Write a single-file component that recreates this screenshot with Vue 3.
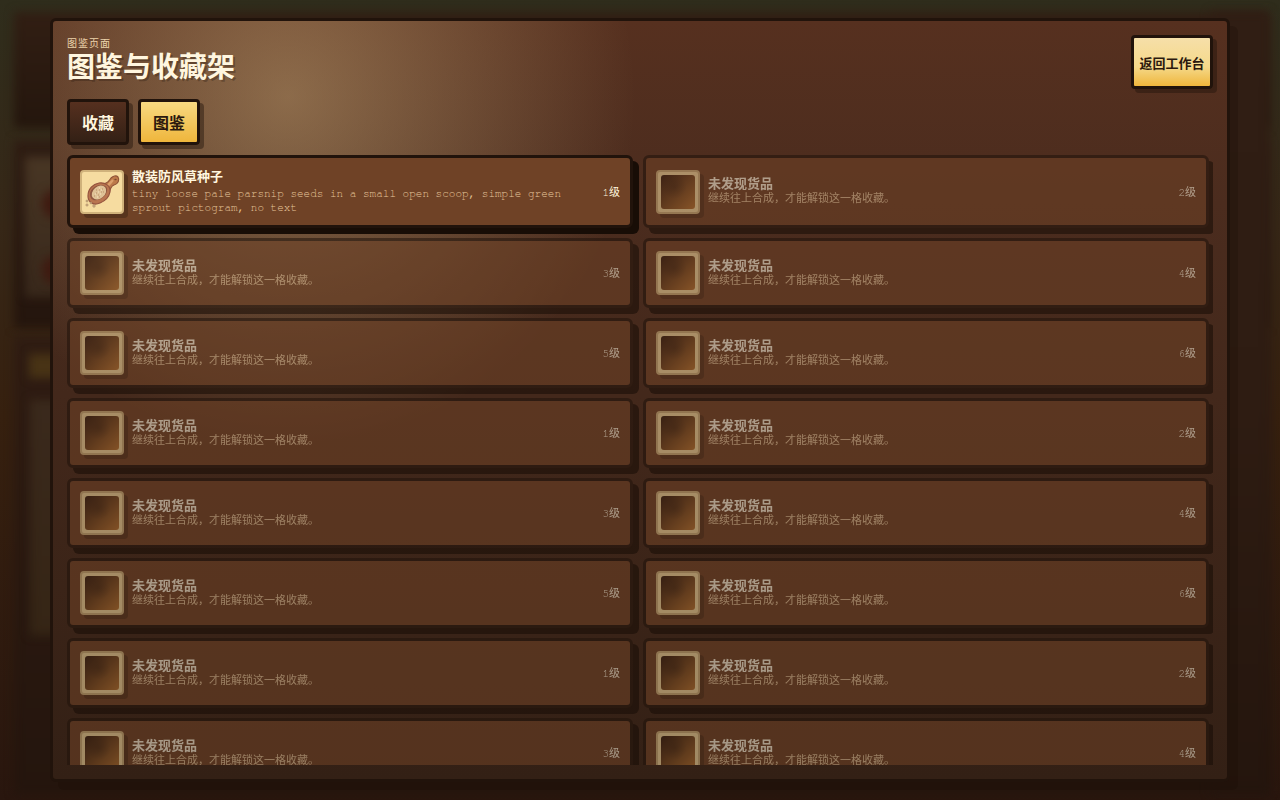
<script setup>
import { ref } from 'vue'

const tab = ref('codex')
const tabs = [
  { id: 'favorites', label: '收藏' },
  { id: 'codex', label: '图鉴' }
]

const found = {
  name: '散装防风草种子',
  note: 'tiny loose pale parsnip seeds in a small open scoop, simple green sprout pictogram, no text'
}

// levels run 1 to 6 per chain, only the very first item is unlocked
const entries = Array.from({ length: 16 }, (_, i) => ({
  id: i,
  level: (i % 6) + 1,
  locked: i > 0,
  name: i > 0 ? '未发现货品' : found.name,
  note: i > 0 ? '继续往上合成，才能解锁这一格收藏。' : found.note
}))
</script>

<template>
  <div class="screen">
    <div class="backdrop" aria-hidden="true">
      <div class="blur-box top-bar"></div>
      <div class="blur-box order"></div>
      <div class="blur-box side"></div>
      <div class="blur-box right"></div>
      <div class="blur-box poster"></div>
      <div class="blur-box badge"></div>
      <div class="blur-box note"></div>
      <div class="blur-box spot spot-a"></div>
      <div class="blur-box spot spot-b"></div>
    </div>

    <main class="panel">
      <header class="head">
        <div class="titles">
          <p class="eyebrow">图鉴页面</p>
          <h1>图鉴与收藏架</h1>
        </div>
        <button type="button" class="back">返回工作台</button>
      </header>

      <nav class="tabs">
        <button
          v-for="t in tabs"
          :key="t.id"
          type="button"
          class="tab"
          :class="{ active: tab === t.id }"
          @click="tab = t.id"
        >{{ t.label }}</button>
      </nav>

      <section class="grid">
        <article v-for="e in entries" :key="e.id" class="card" :class="{ locked: e.locked }">
          <div class="icon">
            <i v-if="e.locked" class="unknown"></i>
            <svg v-else viewBox="0 0 40 40" class="scoop">
              <path d="M20 12 C25 12 27 9 29 6 C31 4 34 3 36 5 C38 8 36 12 32 13 C29 14 28 17 27 21 Z" fill="#bd7a49" stroke="#8f5236" stroke-width="1.1" />
              <path d="M24 15 C27 13 29 10 31 8" fill="none" stroke="#dca06c" stroke-width="2.4" />
              <ellipse cx="33.5" cy="7.5" rx="1.2" ry="0.8" fill="#7d4832" />
              <path d="M6 24 C6 17 11 12 17 11 C23 10 29 14 28 20 C27 25 23 29 18 31 C11 34 6 30 6 24 Z" fill="#b9754f" stroke="#95543f" stroke-width="1.2" />
              <path d="M8 22 C8 17 14 13 18 13 C23 13 26 15 25 19 C24 24 20 27 15 28 C11 29 8 27 8 22 Z" fill="#8f5740" />
              <ellipse cx="17" cy="20.5" rx="8" ry="6" transform="rotate(-40 17 20.5)" fill="#dfc296" />
              <path d="M12 24h1 M14 21h1 M17 18h1 M20 17h1 M16 23h1 M19 20h1 M14 18h1 M21 20h1 M17 25h1" stroke="#b98f6b" />
              <path d="M13 22h1 M16 20h1 M18 22h1 M19 18h1 M15 25h1 M17 16h1" stroke="#f6e4c2" />
              <g fill="#dcc08f" stroke="#a78561" stroke-width="0.7">
                <circle cx="5" cy="29" r="1" />
                <circle cx="5" cy="33" r="1.1" />
                <circle cx="9" cy="31" r="0.9" />
                <circle cx="12" cy="34" r="1.2" />
              </g>
            </svg>
          </div>
          <div class="text">
            <strong>{{ e.name }}</strong>
            <p>{{ e.note }}</p>
          </div>
          <span class="level">{{ e.level }}级</span>
        </article>
      </section>
    </main>
  </div>
</template>

<style>
body {
  margin: 0;
  background: #2c1a10;
}
</style>

<style scoped>
.screen {
  position: relative;
  display: flex;
  justify-content: center;
  height: 100vh;
  box-sizing: border-box;
  padding: 18px;
  overflow: hidden;
  background: linear-gradient(180deg, #2f2d1c 0%, #362717 28%, #36200f 52%, #29160e 100%);
  font-family: "Courier 10 Pitch", "Nimbus Mono PS", FreeMono, "Liberation Mono", "Noto Sans CJK SC", monospace;
  color: #fff6df;
}
.backdrop {
  position: absolute;
  inset: 0;
}
/* out-of-focus workbench behind the dialog */
.blur-box {
  position: absolute;
  filter: blur(5px);
}
.top-bar {
  inset: 12px 12px auto 14px;
  height: 116px;
  background: linear-gradient(#311e13, #24160d);
}
.order {
  inset: 140px 12px auto 14px;
  height: 188px;
  background: linear-gradient(#2f1d13, #24150d);
}
.side {
  inset: 336px 12px 6px 14px;
  background: linear-gradient(#2f1c12, #24150d);
}
.right {
  inset: 12px 10px 6px auto;
  width: 60px;
  background: linear-gradient(#301e14, #2e1c12 50%, #24150d);
}
.poster {
  left: 25px;
  top: 157px;
  width: 60px;
  height: 140px;
  background: linear-gradient(#483624, #38281b);
}
.badge {
  left: 29px;
  top: 354px;
  width: 60px;
  height: 24px;
  background: #483315;
}
.note {
  left: 30px;
  top: 400px;
  width: 60px;
  height: 235px;
  background: linear-gradient(#3a291c, #352515);
}
.spot {
  left: 42px;
  width: 24px;
  height: 28px;
  border-radius: 50%;
  background: #3f1a10;
}
.spot-a {
  top: 190px;
}
.spot-b {
  top: 256px;
}

.panel {
  position: relative;
  display: flex;
  flex-direction: column;
  gap: 10px;
  width: 100%;
  max-width: 1180px;
  box-sizing: border-box;
  padding: 14px;
  border: 3px solid #21130b;
  border-radius: 6px;
  background:
    radial-gradient(circle at 20% 10%, rgba(250, 220, 156, 0.35), transparent 30%),
    linear-gradient(180deg, #56301f, #4b2c1e 24%, #332015);
  box-shadow: 8px 8px 0 rgba(24, 13, 6, 0.24);
}
.head {
  display: flex;
  justify-content: space-between;
  align-items: flex-start;
}
.titles {
  padding-top: 1px;
}
.eyebrow {
  margin: 0;
  font-size: 10px;
  line-height: 16px;
  letter-spacing: 1px;
  color: #ecd4ab;
}
h1 {
  margin: 0;
  font-size: 28px;
  line-height: 34px;
  text-shadow: 2px 2px 0 rgba(33, 19, 11, 0.3);
}
button {
  border: 3px solid #21130b;
  border-radius: 4px;
  font-family: inherit;
  font-weight: 700;
  box-shadow: 4px 4px 0 rgba(33, 19, 11, 0.45);
  cursor: pointer;
}
.back {
  min-width: 82px;
  height: 54px;
  padding: 0 4px;
  font-size: 13px;
  color: #2b190e;
  background: linear-gradient(#f6dfa9, #f5d98a 60%, #efb63c);
}
.tabs {
  display: flex;
  gap: 9px;
}
.tab {
  height: 46px;
  padding: 0 12px;
  font-size: 16px;
  color: #fff6df;
  background: linear-gradient(#56301f, #332015);
}
.tab.active {
  color: #2b190e;
  background: linear-gradient(#f8d981, #efb63c);
}
.grid {
  flex: 1;
  min-height: 0;
  display: grid;
  grid-template-columns: 1fr 1fr;
  align-content: start;
  gap: 10px;
  padding-right: 4px;
  overflow: hidden;
}
.card {
  display: flex;
  align-items: center;
  gap: 8px;
  min-height: 73px;
  box-sizing: border-box;
  padding: 10px;
  border: 3px solid #21130b;
  border-radius: 6px;
  background: #6f4226;
  box-shadow: 6px 6px 0 #180d06;
}
.card.locked {
  min-height: 70px;
  opacity: 0.56;
}
.icon {
  display: grid;
  place-items: center;
  flex: none;
  width: 44px;
  height: 44px;
  box-sizing: border-box;
  border: 2px solid #d0b27b;
  border-radius: 4px;
  background: #f6dca0;
  box-shadow: 4px 4px 0 rgba(33, 19, 11, 0.3);
}
.scoop {
  width: 40px;
  height: 40px;
}
.unknown {
  width: 34px;
  height: 34px;
  border-radius: 3px;
  background:
    radial-gradient(circle at 40% 35%, rgba(33, 19, 11, 0.3), transparent 40%),
    linear-gradient(135deg, #301a0e, #b87430);
}
.text {
  flex: 1;
  min-width: 0;
}
.text strong {
  display: block;
  font-size: 13px;
  line-height: 18px;
}
.locked .text strong {
  line-height: 15px;
}
.text p {
  margin: 0;
  padding-right: 24px;
  font-size: 11px;
  line-height: 14px;
  color: #e6c69c;
}
.level {
  padding-top: 2px;
  font-size: 11px;
  line-height: 14px;
  color: #fff6df;
}
</style>
